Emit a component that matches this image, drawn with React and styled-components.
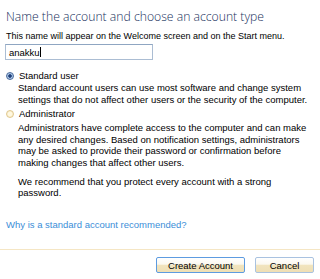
import React, { useState } from "react";
import styled, { createGlobalStyle } from "styled-components";

const GlobalStyle = createGlobalStyle`
  body {
    margin: 0;
    padding: 0;
    background: #ffffff;
    font-family: "Liberation Sans", Arial, sans-serif;
  }
`;

function App() {
  const [name, setName] = useState("anakku");
  const [type, setType] = useState("standard");

  return (
    <>
      <GlobalStyle />
      <Page>
        <Body>
          <Title>Name the account and choose an account type</Title>
          <Hint>This name will appear on the Welcome screen and on the Start menu.</Hint>
          <NameBox>
            <NameText>{name}</NameText>
            <Caret />
          </NameBox>

          <Option $top="10px">
            <Radio
              $checked={type === "standard"}
              onClick={() => setType("standard")}
            />
            <OptionLabel>Standard user</OptionLabel>
          </Option>
          <Desc $top="0">
            Standard account users can use most software and change system
            settings that do not affect other users or the security of the
            computer.
          </Desc>

          <Option $top="3px">
            <Radio $checked={type === "admin"} onClick={() => setType("admin")} />
            <OptionLabel>Administrator</OptionLabel>
          </Option>
          <Desc $top="2px">
            Administrators have complete access to the computer and can make
            any desired changes. Based on notification settings, administrators
            may be asked to provide their password or confirmation before
            making changes that affect other users.
          </Desc>
          <Desc $top="7px">
            We recommend that you protect every account with a strong password.
          </Desc>

          <Link href="#">Why is a standard account recommended?</Link>
        </Body>

        <Footer>
          <Button $primary>Create Account</Button>
          <Button>Cancel</Button>
        </Footer>
      </Page>
    </>
  );
}

export default App;

const Page = styled.div`
  width: 320px;
  height: 279px;
  display: flex;
  flex-direction: column;
  background: #fff;
  overflow: hidden;
`;

const Body = styled.div`
  flex: 1;
  display: flex;
  flex-direction: column;
  align-items: flex-start;
  padding: 10px 0 0 6px;
`;

const Title = styled.div`
  font-family: "Open Sans", sans-serif;
  font-weight: 300;
  font-size: 12.2px;
  line-height: 14px;
  color: #17305c;
  margin-bottom: 7px;
`;

const Hint = styled.div`
  font-size: 9px;
  line-height: 11px;
  color: #000;
`;

const NameBox = styled.div`
  box-sizing: border-box;
  width: 148px;
  height: 16px;
  margin: 2px 0 0 -1px;
  border: 1px solid #abbdd3;
  border-top-color: #8fa6c2;
  display: flex;
  align-items: center;
  padding-left: 3px;
`;

const NameText = styled.span`
  font-size: 9.5px;
  color: #000;
`;

const Caret = styled.span`
  width: 1px;
  height: 10px;
  background: #000;
`;

const Option = styled.div`
  display: flex;
  align-items: center;
  gap: 5px;
  margin-top: ${(p) => p.$top};
`;

const Radio = styled.span`
  box-sizing: border-box;
  width: 8px;
  height: 8px;
  border-radius: 50%;
  border: 1px solid ${(p) => (p.$checked ? "#4a6a9a" : "#e0c890")};
  background: ${(p) =>
    p.$checked
      ? "radial-gradient(circle, #1f3f78 0 35%, #a9c4e6 45% 100%)"
      : "radial-gradient(circle, #fff8e0 0 40%, #f4e2b4 100%)"};
  cursor: pointer;
`;

const OptionLabel = styled.span`
  font-size: 9.5px;
  line-height: 12px;
  color: #000;
`;

const Desc = styled.div`
  width: 290px;
  margin: ${(p) => p.$top} 0 0 12px;
  font-size: 9.5px;
  line-height: 11.6px;
  color: #000;
`;

const Link = styled.a`
  margin-top: 20px;
  font-size: 9.5px;
  line-height: 12px;
  color: #3b8ed8;
  text-decoration: none;
`;

const Footer = styled.div`
  border-top: 1px solid #f5e6c4;
  display: flex;
  justify-content: flex-end;
  gap: 10px;
  padding: 7px 6px 6px 0;
`;

const Button = styled.button`
  box-sizing: border-box;
  height: 16px;
  min-width: ${(p) => (p.$primary ? "89px" : "59px")};
  padding: 0 6px;
  border: 1px solid ${(p) => (p.$primary ? "#5d9be0" : "#a9c2e0")};
  border-radius: 2px;
  background: linear-gradient(#ffffff 0%, #fbf8ef 45%, #f1e4bf 50%, #efdfb4 100%);
  font-family: "Liberation Sans", Arial, sans-serif;
  font-size: 9.5px;
  color: #000;
  cursor: pointer;
`;
